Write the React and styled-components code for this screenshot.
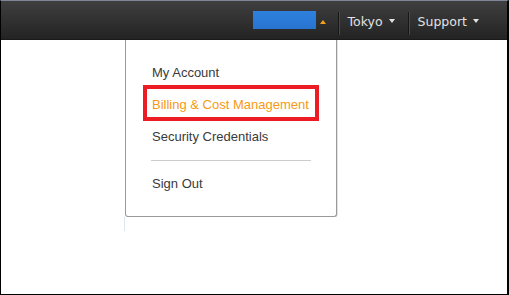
import React from 'react'
import styled, { createGlobalStyle } from 'styled-components'

const GlobalStyle = createGlobalStyle`
  html, body {
    margin: 0;
    padding: 0;
    background: #fff;
  }
  * {
    box-sizing: border-box;
  }
`

const Frame = styled.div`
  position: relative;
  width: 509px;
  height: 295px;
  border: 1px solid #000;
  border-top-color: #7d8797;
  border-right-width: 2px;
  background: #fff;
  overflow: hidden;
  font-family: "Liberation Sans", Arial, sans-serif;
`

const Header = styled.div`
  height: 39px;
  display: flex;
  justify-content: flex-end;
  align-items: stretch;
  padding-right: 15px;
  background: linear-gradient(#3f3f3f, #232323);
  border-bottom: 1px solid #1a1a1a;
`

const NavItem = styled.div`
  display: flex;
  align-items: center;
  gap: ${({ gap }) => gap || 6}px;
  padding: 2px ${({ right }) => right || 13}px 0 ${({ left }) => left || 8}px;
  color: #e2e2e2;
  font-family: "DejaVu Sans", Verdana, sans-serif;
  font-size: 12.5px;
  cursor: pointer;
`

const AccountName = styled.span`
  display: block;
  width: 63px;
  height: 18px;
  margin-top: -2px;
  background: linear-gradient(#2f80de, #2774d0);
`

const Caret = styled.span`
  display: block;
  width: 0;
  height: 0;
  border-left: ${({ size }) => size || 3.5}px solid transparent;
  border-right: ${({ size }) => size || 3.5}px solid transparent;
  ${({ up, color }) =>
    up
      ? `border-bottom: 4px solid ${color};`
      : `border-top: 4px solid ${color};`}
  margin-top: ${({ up }) => (up ? 2 : 0)}px;
`

const Divider = styled.div`
  width: 2px;
  margin: 11px 0 4px;
  border-left: 1px solid #161616;
  border-right: 1px solid #4a4a4a;
`

const Dropdown = styled.div`
  position: absolute;
  left: 124px;
  top: 39px;
  width: 212px;
  height: 177px;
  padding: 17px 0 0;
  background: #fff;
  border: 1px solid #999;
  border-top: none;
  border-radius: 0 0 3px 3px;
  box-shadow: 1px 0 0 #e4e4e4;
`

const MenuItem = styled.div`
  position: relative;
  line-height: 32px;
  padding-left: 26px;
  font-size: 13px;
  color: ${({ active }) => (active ? '#f79a12' : '#3a3a3a')};
  white-space: nowrap;
`

const Highlight = styled.span`
  position: absolute;
  left: 17px;
  top: -4px;
  bottom: 0;
  width: 176px;
  border: 4px solid #ed1c24;
  pointer-events: none;
`

const MenuSeparator = styled.div`
  height: 1px;
  margin: 7px 0 7px 25px;
  width: 160px;
  background: #cccccc;
`

const FaintLine = styled.div`
  position: absolute;
  left: 123px;
  top: 216px;
  width: 1px;
  height: 14px;
  background: #dfe6ee;
`

export default function App() {
  return (
    <>
      <GlobalStyle />
      <Frame>
        <Header>
          <NavItem gap={4} right={12} left={0}>
            <AccountName />
            <Caret up color="#f7a21b" />
          </NavItem>
          <Divider />
          <NavItem>
            Tokyo
            <Caret color="#e2e2e2" />
          </NavItem>
          <Divider />
          <NavItem>
            Support
            <Caret color="#e2e2e2" />
          </NavItem>
        </Header>
        <FaintLine />
        <Dropdown>
          <MenuItem>My Account</MenuItem>
          <MenuItem active>
            Billing &amp; Cost Management
            <Highlight />
          </MenuItem>
          <MenuItem>Security Credentials</MenuItem>
          <MenuSeparator />
          <MenuItem>Sign Out</MenuItem>
        </Dropdown>
      </Frame>
    </>
  )
}
